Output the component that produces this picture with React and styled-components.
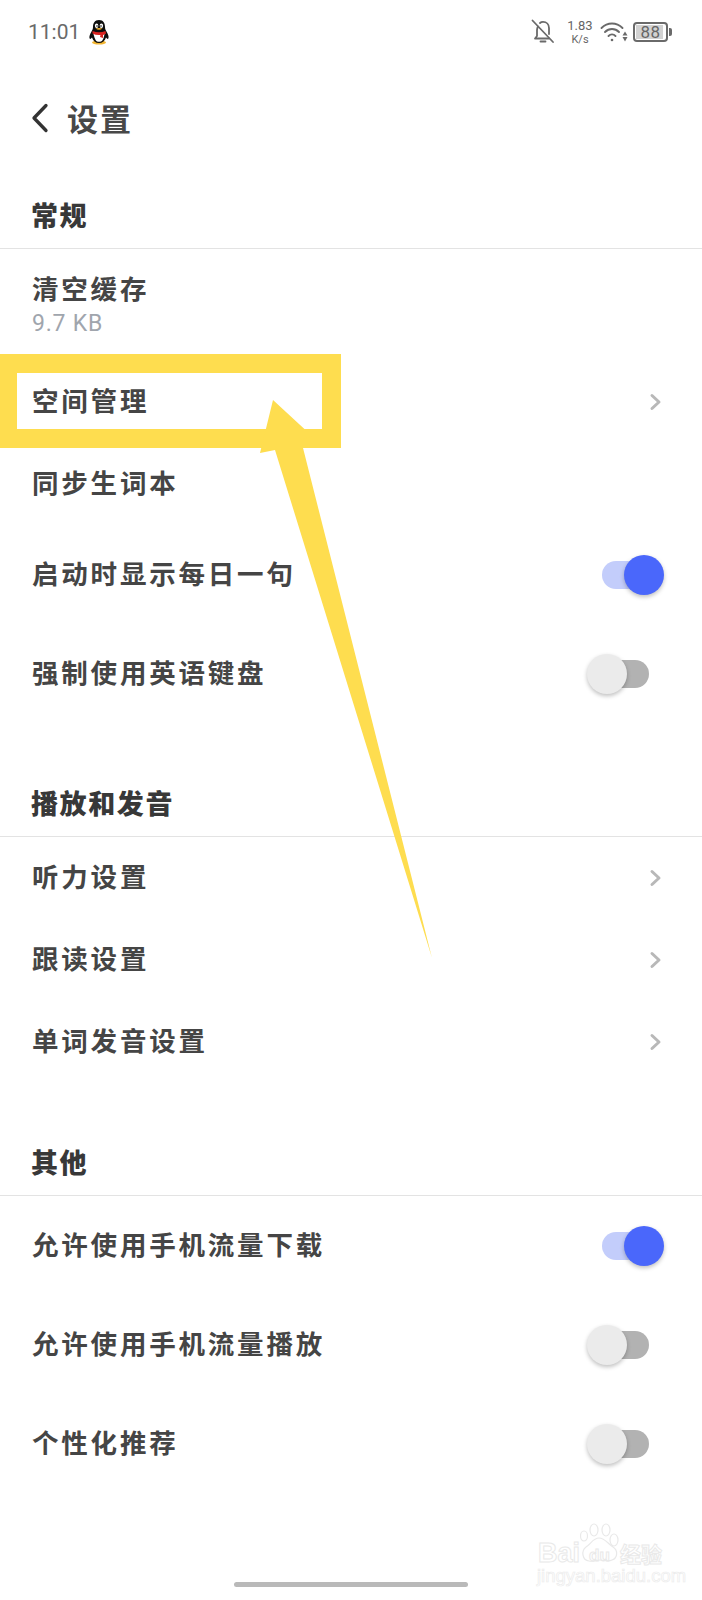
import React from "react";
import styled, { createGlobalStyle } from "styled-components";

const Global = createGlobalStyle`
  html, body { margin: 0; padding: 0; background: #fff; }
  * { box-sizing: border-box; }
`;

const CJK = `"Noto Sans CJK SC", "Noto Sans", sans-serif`;

const Page = styled.div`
  position: relative;
  width: 702px;
  height: 1600px;
  overflow: hidden;
  background: #fff;
  font-family: ${CJK};
  color: #3c3c3c;
`;

const StatusBar = styled.div`
  height: 64px;
  padding: 0 30px 0 28px;
  display: flex;
  align-items: center;
  justify-content: space-between;
`;
const StatusLeft = styled.div`
  display: flex;
  align-items: center;
  gap: 8px;
`;
const Time = styled.span`
  font: 400 21px/24px Roboto, sans-serif;
  color: #6a6a6a;
`;
const StatusRight = styled.div`
  display: flex;
  align-items: center;
`;
const Speed = styled.div`
  width: 34px;
  margin: 0 3px 0 8px;
  display: flex;
  flex-direction: column;
  align-items: center;
  font-family: Roboto, sans-serif;
  color: #666;
`;
const SpeedValue = styled.span`
  font-size: 13px;
  line-height: 15px;
`;
const SpeedUnit = styled.span`
  font-size: 11px;
  line-height: 13px;
`;
const Battery = styled.div`
  position: relative;
  width: 35px;
  height: 20px;
  margin-left: 5px;
  margin-right: 4px;
  border: 2px solid #6a6a6a;
  border-radius: 4px;
  display: flex;
  align-items: center;
  justify-content: center;
  font: 400 17px/16px Roboto, sans-serif;
  letter-spacing: 0.5px;
  color: #666;
  background: linear-gradient(#d2d2d2, #d2d2d2) 1px 1px / 27px 14px no-repeat;
  &::after {
    content: "";
    position: absolute;
    right: -6px;
    top: 4px;
    width: 3px;
    height: 8px;
    background: #6a6a6a;
    border-radius: 0 2px 2px 0;
  }
`;

const Header = styled.div`
  height: 108px;
  padding-left: 31px;
  display: flex;
  align-items: center;
  gap: 18px;
`;
const Title = styled.h1`
  margin: 0;
  font-size: 31px;
  font-weight: 700;
  letter-spacing: 2px;
  line-height: 40px;
  color: #484848;
`;

const Section = styled.section`
  margin-top: ${(p) => p.$gap}px;
`;
const SectionTitle = styled.h2`
  margin: 0;
  height: 77px;
  padding: 9px 0 0 31px;
  display: flex;
  align-items: center;
  font-size: 27px;
  font-weight: 900;
  letter-spacing: 1.6px;
  color: #383838;
  border-bottom: 1px solid #e3e3e3;
`;
const Row = styled.div`
  height: ${(p) => p.$h}px;
  padding: 0 38px 0 32px;
  display: flex;
  align-items: center;
  justify-content: space-between;
`;
const Label = styled.span`
  margin-bottom: 4px;
  font-size: 26.5px;
  font-weight: 700;
  letter-spacing: 2.8px;
  line-height: 34px;
  color: #454545;
`;
const CacheRow = styled.div`
  height: 112px;
  padding: 22px 32px 0;
  display: flex;
  flex-direction: column;
`;
const Sub = styled.span`
  font: 400 23px/30px Roboto, sans-serif;
  letter-spacing: 0.8px;
  color: #a0a5ad;
`;
const ChevronBox = styled.svg`
  flex: none;
`;

const SwitchBox = styled.div`
  position: relative;
  width: 78px;
  height: 40px;
  flex: none;
`;
const Track = styled.div`
  position: absolute;
  top: 6px;
  height: 28px;
  border-radius: 14px;
  left: ${(p) => (p.$on ? 16 : 22)}px;
  width: ${(p) => (p.$on ? 40 : 41)}px;
  background: ${(p) => (p.$on ? "#c3cdfb" : "#b2b2b2")};
`;
const Knob = styled.div`
  position: absolute;
  top: 0;
  width: 40px;
  height: 40px;
  border-radius: 50%;
  left: ${(p) => (p.$on ? 38 : 1)}px;
  background: ${(p) => (p.$on ? "#4a67fb" : "#ebebeb")};
  box-shadow: 0 2px 4px rgba(0, 0, 0, 0.25);
`;

const HomeArea = styled.div`
  padding-top: 89px;
  display: flex;
  justify-content: center;
`;
const HomeBar = styled.div`
  width: 234px;
  height: 5px;
  border-radius: 3px;
  background: #b9b9b9;
`;

const Frame = styled.div`
  position: absolute;
  left: -20px;
  top: 354px;
  width: 361px;
  height: 94px;
  border: solid #fedd4f;
  border-width: 19px 19px 19px 37px;
  pointer-events: none;
`;
const ArrowLayer = styled.svg`
  position: absolute;
  left: 0;
  top: 0;
  pointer-events: none;
`;

const Watermark = styled.div`
  position: absolute;
  left: 536px;
  top: 1522px;
  width: 132px;
  height: 62px;
  color: transparent;
  -webkit-text-stroke: 1px #e9e9e9;
`;
const MarkBai = styled.span`
  position: absolute;
  left: 2px;
  top: 17px;
  font: 700 27px/28px "Liberation Sans", sans-serif;
`;
const MarkDu = styled.span`
  position: absolute;
  left: 53px;
  top: 25px;
  font: 700 17px/18px "Liberation Sans", sans-serif;
`;
const MarkCn = styled.span`
  position: absolute;
  left: 84px;
  top: 18px;
  font: 700 21px/26px ${CJK};
`;
const MarkUrl = styled.span`
  position: absolute;
  left: 1px;
  top: 45px;
  font: 400 18.5px/18px "Liberation Sans", sans-serif;
  -webkit-text-stroke: 0.7px #ececec;
  white-space: nowrap;
`;
const MarkPaw = styled.svg`
  position: absolute;
  left: 42px;
  top: 0;
`;

const Chevron = () => (
  <ChevronBox width="16" height="18" viewBox="0 0 16 18">
    <path d="M4 2.500 L11 9 L4 15.500" fill="none" stroke="#b8b8b8" strokeWidth="3" strokeLinecap="round" strokeLinejoin="round" />
  </ChevronBox>
);

const Switch = ({ on }) => (
  <SwitchBox>
    <Track $on={on} />
    <Knob $on={on} />
  </SwitchBox>
);

const Penguin = () => (
  <svg width="22" height="26" viewBox="0 0 22 26">
    <ellipse cx="11" cy="23.500" rx="7" ry="2" fill="#f2b632" />
    <path d="M11 1C6.500 1 5 4.500 5 8 C5 10 4.500 11 3 13.500 C1 17 1 20 2.500 20 L4 18.500 C5 22 7.500 24 11 24 C14.500 24 17 22 18 18.500 L19.500 20 C21 20 21 17 19 13.500 C17.500 11 17 10 17 8 C17 4.500 15.500 1 11 1Z" fill="#0d0d0d" />
    <path d="M5.500 15 C7 21 8 22.800 11 22.800 C14 22.800 15.500 21 16.500 15Z" fill="#fff" />
    <ellipse cx="8.600" cy="6.800" rx="1.700" ry="2.200" fill="#fff" />
    <ellipse cx="13.400" cy="6.800" rx="1.700" ry="2.200" fill="#fff" />
    <circle cx="9" cy="7" r=".8" fill="#000" />
    <circle cx="13" cy="7" r=".8" fill="#000" />
    <path d="M7.500 9.500 Q11 8.300 14.500 9.500 Q11 12 7.500 9.500Z" fill="#f3b32e" />
    <path d="M4.500 12 Q11 14.500 17.500 12 L18 14.500 Q15 16 15 16 L15 19 L12 18 L12.500 16 Q8 16.500 4.500 14.500Z" fill="#d9231f" />
  </svg>
);

const BellOff = () => (
  <svg width="24" height="26" viewBox="0 0 24 26" fill="none" stroke="#6a6a6a" strokeWidth="1.800" strokeLinecap="round" strokeLinejoin="round">
    <path d="M7 7.500 C6.500 8.500 6 9.500 6 11 V17 L4 19.500 H18" />
    <path d="M9 4 C10 3 11 2.800 12 2.800 C15.500 2.800 18 5.500 18 9 V15" />
    <path d="M9.500 22.500 H14.500" />
    <path d="M1.500 1.500 L22 23" />
  </svg>
);

const Wifi = () => (
  <svg width="28" height="22" viewBox="0 0 28 22" fill="none" stroke="#6a6a6a" strokeWidth="1.900" strokeLinecap="round">
    <path d="M1.500 7 C7.500 1 16.500 1 22.500 7" />
    <path d="M5 11 C9 7 15 7 19 11" />
    <path d="M8.500 15 C10.500 13 13.500 13 15.500 15" />
    <circle cx="12" cy="19" r="1.300" fill="#6a6a6a" stroke="none" />
    <path d="M25 10.500 L27.500 14.500 H22.500Z M25 20.500 L27.500 16 H22.500Z" fill="#6a6a6a" stroke="none" />
  </svg>
);

const Back = () => (
  <svg width="18" height="30" viewBox="0 0 18 30">
    <path d="M15 2.500 L3 15 L15 27.500" fill="none" stroke="#333" strokeWidth="3.300" strokeLinecap="round" strokeLinejoin="round" />
  </svg>
);

export default function App() {
  return (
    <Page>
      <Global />
      <StatusBar>
        <StatusLeft>
          <Time>11:01</Time>
          <Penguin />
        </StatusLeft>
        <StatusRight>
          <BellOff />
          <Speed>
            <SpeedValue>1.83</SpeedValue>
            <SpeedUnit>K/s</SpeedUnit>
          </Speed>
          <Wifi />
          <Battery>88</Battery>
        </StatusRight>
      </StatusBar>

      <Header>
        <Back />
        <Title>设置</Title>
      </Header>

      <Section $gap={0}>
        <SectionTitle>常规</SectionTitle>
        <CacheRow>
          <Label>清空缓存</Label>
          <Sub>9.7 KB</Sub>
        </CacheRow>
        <Row $h={82}><Label>空间管理</Label><Chevron /></Row>
        <Row $h={82}><Label>同步生词本</Label></Row>
        <Row $h={99}><Label>启动时显示每日一句</Label><Switch on /></Row>
        <Row $h={99}><Label>强制使用英语键盘</Label><Switch /></Row>
      </Section>

      <Section $gap={37}>
        <SectionTitle>播放和发音</SectionTitle>
        <Row $h={82}><Label>听力设置</Label><Chevron /></Row>
        <Row $h={82}><Label>跟读设置</Label><Chevron /></Row>
        <Row $h={82}><Label>单词发音设置</Label><Chevron /></Row>
      </Section>

      <Section $gap={36}>
        <SectionTitle>其他</SectionTitle>
        <Row $h={99}><Label>允许使用手机流量下载</Label><Switch on /></Row>
        <Row $h={99}><Label>允许使用手机流量播放</Label><Switch /></Row>
        <Row $h={99}><Label>个性化推荐</Label><Switch /></Row>
      </Section>

      <HomeArea><HomeBar /></HomeArea>

      <Frame />
      <ArrowLayer width="702" height="1600" viewBox="0 0 702 1600">
        <polygon points="273,400 312,436 301,440 432,958 275,450 260,453" fill="#fedd4f" />
      </ArrowLayer>

      <Watermark>
        <MarkPaw width="44" height="44" viewBox="0 0 44 44" fill="none" stroke="#e9e9e9" strokeWidth="1.200">
          <ellipse cx="6" cy="14" rx="3.500" ry="5" />
          <ellipse cx="16" cy="8" rx="4" ry="6" />
          <ellipse cx="28" cy="8" rx="4" ry="6" />
          <ellipse cx="36" cy="18" rx="4" ry="6" />
          <path d="M21 16 C15 16 13 22 8 25 C3 29 4 38 11 39 C16 40 18 38 22 38 C27 38 30 40 34 38 C40 36 40 28 35 25 C30 22 27 16 21 16Z" />
        </MarkPaw>
        <MarkBai>Bai</MarkBai>
        <MarkDu>du</MarkDu>
        <MarkCn>经验</MarkCn>
        <MarkUrl>jingyan.baidu.com</MarkUrl>
      </Watermark>
    </Page>
  );
}
